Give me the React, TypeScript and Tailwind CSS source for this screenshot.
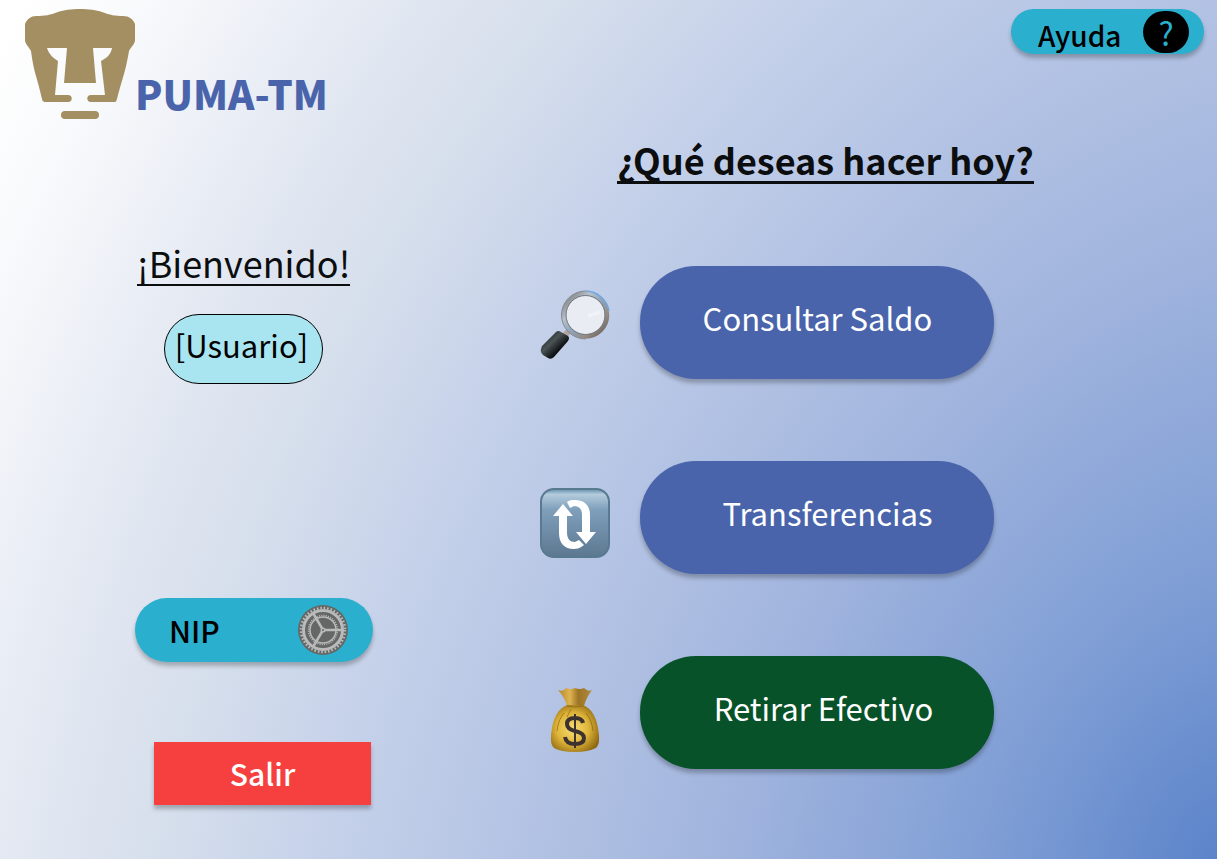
import React from "react";

const Backdrop = () => (
  <svg
    viewBox="0 0 1217 859"
    preserveAspectRatio="none"
    className="absolute inset-0 -z-10 size-full"
    aria-hidden="true"
  >
    <defs>
      <radialGradient
        id="glow"
        gradientUnits="userSpaceOnUse"
        cx="0"
        cy="0"
        r="1"
        gradientTransform="translate(1217 859) rotate(24.4) scale(1476 2062)"
      >
        <stop offset="0" stopColor="#5c84ca" />
        <stop offset=".163" stopColor="#82a0d6" />
        <stop offset=".33" stopColor="#a2b5de" />
        <stop offset=".585" stopColor="#c6d2ea" />
        <stop offset=".69" stopColor="#d6dfec" />
        <stop offset=".78" stopColor="#e3e8f2" />
        <stop offset=".92" stopColor="#f9fafc" />
        <stop offset=".99" stopColor="#fff" />
      </radialGradient>
    </defs>
    <rect width="1217" height="859" fill="url(#glow)" />
  </svg>
);

const PumaLogo = () => (
  <svg viewBox="0 0 110 110" className="size-[110px] shrink-0" aria-hidden="true">
    <path
      fill="#a38f61"
      fillRule="evenodd"
      d="M0 15C2 10 6 7 11 7C20 7 25 6 33 3C44 -1 66 -1 77 3C85 6 90 7 98 7C104 7 108 10 110 15V31C110 35 106 38 104 42C100 65 98 67 92 90C91 93 91 93 88 93H66C61 93 61 86 66 86H80L76 52C82 49 86 45 87 39H68L71 74H39L42 39H22C24 45 28 49 33 52L30 86H43C48 86 48 93 43 93H21C18 93 18 93 17 90C12 67 9 65 6 42C4 38 0 35 0 31Z"
    />
    <rect x="36" y="102" width="38" height="8" rx="4" fill="#a38f61" />
  </svg>
);

const Magnifier = () => (
  <svg viewBox="0 4 70 70" className="size-[70px] overflow-visible" aria-hidden="true">
    <defs>
      <linearGradient id="rim" x1="0" y1="0" x2="1" y2="1">
        <stop offset="0" stopColor="#6f7174" />
        <stop offset=".3" stopColor="#b9c1c9" />
        <stop offset=".5" stopColor="#8fa6bd" />
        <stop offset=".75" stopColor="#958a83" />
        <stop offset="1" stopColor="#5d5551" />
      </linearGradient>
      <linearGradient id="grip" x1="0" y1="0" x2="1" y2="1">
        <stop offset="0" stopColor="#090b0c" />
        <stop offset=".4" stopColor="#4b5355" />
        <stop offset=".65" stopColor="#111415" />
        <stop offset="1" stopColor="#000" />
      </linearGradient>
    </defs>
    <path d="M24 47L31 40" stroke="#b4a69e" strokeWidth="6" />
    <path d="M2 57L16 43Q18 41 21 43L28 47Q30 49 28 52L14 68Q11 71 8 69L3 66Q0 63 1 60Z" fill="url(#grip)" />
    <circle cx="45.500" cy="26" r="21.500" fill="#e9ecf2" stroke="url(#rim)" strokeWidth="4.500" />
    <path d="M45.500 2A24 24 0 0 1 69 22" fill="none" stroke="#6fa6e0" strokeWidth="1.500" />
    <path d="M45.500 50A24 24 0 0 1 21.500 26A24 24 0 0 1 45.500 2" fill="none" stroke="#84888c" strokeWidth="1" />
    <circle cx="45.500" cy="26" r="19.500" fill="none" stroke="#737980" strokeWidth="1" />
    <path d="M48 27L60 23" stroke="#f1f3f8" strokeWidth="3" />
  </svg>
);

const TransferArrows = () => (
  <svg viewBox="0 0 70 70" className="size-[70px]" aria-hidden="true">
    <defs>
      <linearGradient id="tile" x1="0" y1="0" x2="0" y2="1">
        <stop offset="0" stopColor="#628fab" />
        <stop offset=".08" stopColor="#b3cbdc" />
        <stop offset=".3" stopColor="#7f9fbb" />
        <stop offset="1" stopColor="#5c7891" />
      </linearGradient>
    </defs>
    <rect x="1" y="1" width="68" height="68" rx="13" fill="url(#tile)" stroke="#587990" strokeWidth="2" />
    <path
      fill="#fff"
      d="M13 28L23 16L33 28H27V44C27 51 30 54 35 54L39 52L44 57C40 60 37 61 34 61C24 61 19 55 19 45V28Z"
    />
    <path
      fill="#fff"
      d="M56 44L46 56L36 44H42V27C42 21 39 18 34 18L30 20L27 14C30 12 32 12 35 12C45 12 50 18 50 27V44Z"
    />
  </svg>
);

const MoneyBag = () => (
  <svg viewBox="0 -4 50 70" className="h-[70px] w-[50px]" aria-hidden="true">
    <defs>
      <radialGradient id="sack" cx=".45" cy=".5" r=".6">
        <stop offset="0" stopColor="#f7dd72" />
        <stop offset=".55" stopColor="#dfb53a" />
        <stop offset="1" stopColor="#8f6811" />
      </radialGradient>
      <linearGradient id="neck" x1="0" y1="0" x2="1" y2="0">
        <stop offset="0" stopColor="#b0872f" />
        <stop offset=".35" stopColor="#e0b452" />
        <stop offset=".6" stopColor="#9b7426" />
        <stop offset="1" stopColor="#b28a3a" />
      </linearGradient>
    </defs>
    <path d="M8 3Q13 5 16 1Q21 3 25 1Q30 3 34 1Q38 5 42 3Q36 11 34 19H17Q15 11 8 3Z" fill="url(#neck)" />
    <path d="M17 18H33Q45 23 48 41Q51 57 46 61Q38 65 25 65Q11 65 4 61Q-1 57 2 41Q5 23 17 18Z" fill="url(#sack)" />
    <path d="M17 19Q25 21 33 19M14 26Q8 33 7 44M36 26Q42 33 43 44M21 22L17 30" stroke="#8c6511" strokeWidth="1" fill="none" opacity=".7" />
    <path
      d="M33 36Q32 31 25 31Q17 31 17 37Q17 42 25 44Q34 46 34 51Q34 57 25 57Q16 57 15 50"
      fill="none"
      stroke="#3d3230"
      strokeWidth="4"
    />
    <path d="M25 27V61" stroke="#3d3230" strokeWidth="2" />
  </svg>
);

const Gear = () => (
  <svg viewBox="0 0 52 52" className="size-[52px]" aria-hidden="true">
    <circle cx="26" cy="26" r="25" fill="#646766" />
    <g fill="none" stroke="#b9bbba">
      <circle cx="26" cy="26" r="19.500" strokeWidth="3" />
      <circle cx="26" cy="26" r="22" strokeWidth="2.500" strokeDasharray="1.600 1.856" />
      <circle cx="26" cy="26" r="13" strokeWidth="1.500" />
      <circle cx="26" cy="26" r="14.500" strokeWidth="1.500" strokeDasharray="1.100 1.178" />
      <path d="M26 26H46M26 26L16 9M26 26L16 43" strokeWidth="2.500" />
    </g>
    <circle cx="26" cy="26" r="2.500" fill="#b9bbba" />
    <circle cx="26" cy="26" r="1" fill="#646766" />
  </svg>
);

const actions = [
  { label: "Consultar Saldo", icon: <Magnifier />, tone: "bg-[#4964ab]", inset: "pl-0" },
  { label: "Transferencias", icon: <TransferArrows />, tone: "bg-[#4964ab]", inset: "pl-5" },
  { label: "Retirar Efectivo", icon: <MoneyBag />, tone: "bg-[#075229]", inset: "pl-3" },
];

export default function App() {
  return (
    <div className="relative isolate flex min-h-screen font-['Noto_Sans_CJK_JP','Noto_Sans',sans-serif] text-[#0b0d0e]">
      <Backdrop />
      <aside className="flex w-[44%] flex-col pt-[9px] pl-[25px]">
        <header className="flex items-end">
          <PumaLogo />
          <h1 className="text-[40px] leading-[52px] font-black text-[#4964ab]">PUMA-TM</h1>
        </header>
        <section className="mt-[123px] ml-[110px] flex w-[240px] flex-col items-start">
          <h2 className="ml-0.5 border-b-2 border-[#0b0d0e] text-[36px] leading-10 pb-0.5">¡Bienvenido!</h2>
          <div className="mt-7 ml-[29px] flex h-[70px] w-[159px] items-center justify-center rounded-[35px] border border-black bg-[#a9e5f0] pr-1 pb-2 text-[31px] leading-10 text-black">
            [Usuario]
          </div>
          <button className="mt-[214px] flex h-16 w-[238px] items-center justify-between rounded-full bg-[#2bafce] pr-6 pl-[34px] text-[30px] font-medium text-black shadow-[0_4px_4px_rgba(0,0,0,0.25)]">
            NIP
            <Gear />
          </button>
          <button className="mt-20 ml-[19px] h-[63px] w-[217px] bg-[#f64040] text-[30px] font-medium text-white shadow-[0_4px_4px_rgba(0,0,0,0.25)]">
            Salir
          </button>
        </section>
      </aside>
      <main className="flex flex-1 flex-col pt-[9px] pr-[13px]">
        <button className="flex h-[45px] w-[193px] items-center justify-between self-end rounded-full bg-[#2bafce] pr-[15px] pl-[27px] text-[28px] font-medium text-black shadow-[0_4px_4px_rgba(0,0,0,0.25)]">
          <span className="pt-1.5">Ayuda</span>
          <span className="flex h-[42px] w-[46px] items-center justify-center rounded-[21px] bg-black text-[32px] font-normal text-[#2bafce]">
            ?
          </span>
        </button>
        <h2 className="mt-[85px] ml-[82px] self-start border-b-3 border-[#0b0d0e] pb-0.5 text-[36px] leading-10 font-bold">
          ¿Qué deseas hacer hoy?
        </h2>
        <ul className="mt-[82px] flex flex-col gap-[82px]">
          {actions.map(({ label, icon, tone, inset }) => (
            <li key={label} className="flex items-center">
              <span className="flex w-20 justify-center pt-[10px]" aria-hidden="true">{icon}</span>
              <button
                className={`ml-[25px] h-[113px] w-[354px] rounded-[56px] pb-2 text-[31px] text-white shadow-[0_4px_4px_rgba(0,0,0,0.25)] ${tone} ${inset}`}
              >
                {label}
              </button>
            </li>
          ))}
        </ul>
      </main>
    </div>
  );
}
